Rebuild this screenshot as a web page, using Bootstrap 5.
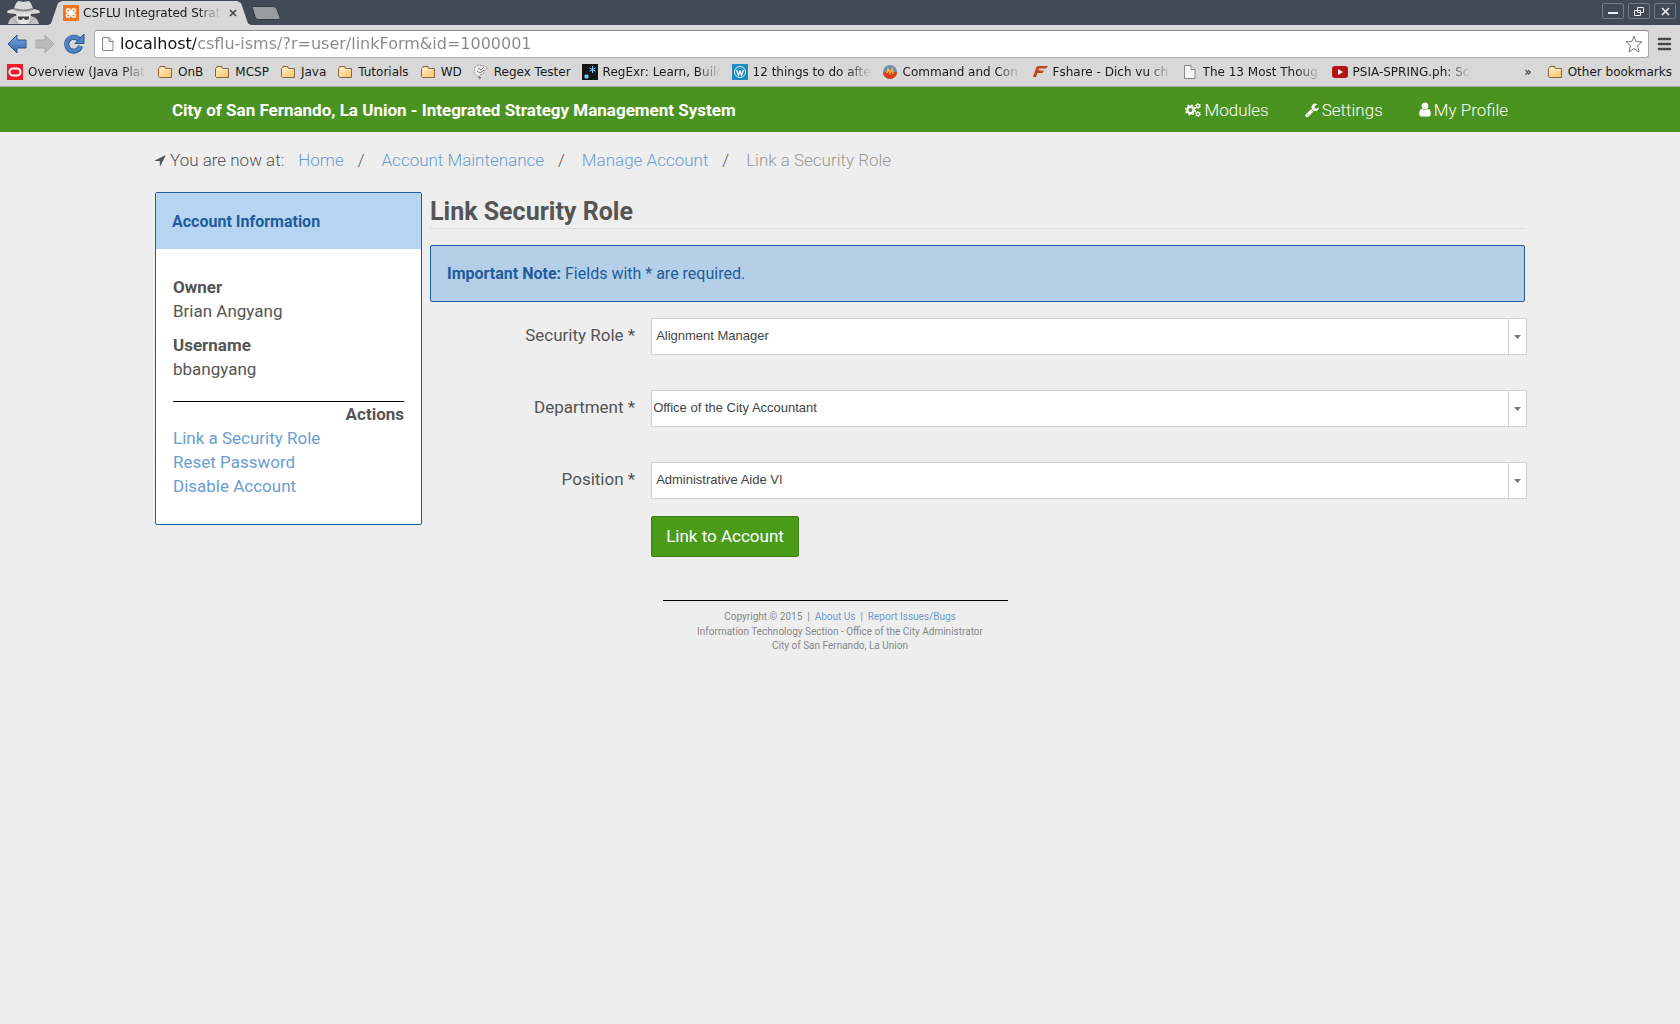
<!DOCTYPE html>
<html lang="en">
<head>
<meta charset="utf-8">
<meta name="viewport" content="width=device-width, initial-scale=1">
<title>CSFLU Integrated Strategy Management System</title>
<link href="https://cdn.jsdelivr.net/npm/bootstrap@5.3.0/dist/css/bootstrap.min.css" rel="stylesheet">
<style>
body { background: #eee; color: #555; font: 400 17px/24px Roboto, sans-serif; }
a { color: #6a9dd1; text-decoration: none; }
svg { display: block; flex: none; }

/* browser window */
.chrome-ui { font: 12px/16px "DejaVu Sans", sans-serif; color: #1a1a1a; background: #d8d8d8; border-bottom: 1px solid #aaa; }
.tab-strip { height: 25px; background: #424b55; }
.tab-shape { width: 203px; height: 25px; margin-left: 7px; background: #d8d8d8; clip-path: polygon(0 100%, 3px 94%, 10px 12%, 14px 4%, 189px 4%, 193px 12%, 200px 94%, 203px 100%); padding: 0 11px 0 15px; }
.tab-title { width: 138px; }
.new-tab { width: 30px; height: 14px; }
.plain-btn { border: 0; background: none; padding: 0; color: inherit; display: block; }
.win-btns { padding: 3px 4px 0 0; }
.win-btn { width: 22px; height: 16px; border: 1px solid #727a82; border-radius: 2px; background: none; padding: 0; display: flex; align-items: center; justify-content: center; }
.fade-text { white-space: nowrap; -webkit-mask-image: linear-gradient(to left, transparent, #000 24px); mask-image: linear-gradient(to left, transparent, #000 24px); }
.tool-bar { height: 34px; padding: 4px 8px 0 7px; }
.omnibox { height: 28px; background: #fff; border: 1px solid #a9a9a9; border-top-color: #8c8c8c; border-radius: 3px; padding: 0 5px 0 6px; margin-left: 9px; }
.omnibox input { border: 0; outline: 0; padding: 0; font: 16px/22px "DejaVu Sans", sans-serif; color: #888; background: linear-gradient(to right, #111 76px, #888 76px); -webkit-background-clip: text; background-clip: text; -webkit-text-fill-color: transparent; margin-left: 5px; }
.bookmarks { height: 27px; padding: 0 8px 2px 7px; gap: 11px; }
.bookmarks a { color: #1a1a1a; display: flex; align-items: center; gap: 5px; white-space: nowrap; }
.bookmarks .fade-text { width: 118px; }

/* page */
.page-width { max-width: 1370px; margin: 0 auto; }
.top-nav { background: #4b9321; height: 45px; }
.top-nav .page-width { padding: 0 17px; }
.brand-link { color: #fff; font-weight: 700; }
.top-links { gap: 36px; font-weight: 300; }
.top-links a { color: #fff; display: flex; align-items: center; gap: 3px; }
.crumbs { padding: 16px 0 20px; font-weight: 300; }
.crumbs ol { gap: 14px; margin: 0 0 0 14px; padding: 0; list-style: none; }
.crumbs li + li::before { content: "/"; margin-right: 17px; color: #555; }
.crumbs .here { color: #999; }
.side-col { flex: 0 0 20%; padding-right: 7px; }
.main-col { padding-left: 1px; }
.info-box { border: 1px solid #1f5c9c; border-radius: 2px; background: #fff; }
.info-head { background: #b6d5f3; color: #1f5c9c; font-size: 16px; font-weight: 700; padding: 17px 16px 15px; margin: 0; line-height: 24px; }
.info-body { padding: 26px 17px 26px; }
.info-body dl { margin: 0; }
.info-body dt { font-weight: 700; }
.info-body dd { margin: 0 0 10px; }
.info-actions { border-top: 1px solid #000; margin-top: 20px; }
.info-actions h3 { font-size: 17px; line-height: 24px; font-weight: 700; text-align: right; margin: 0; }
.page-title { font-size: 25px; line-height: 33px; padding-top: 3px; font-weight: 700; border-bottom: 1px solid #ddd; margin: 0 0 16px; }
.note-box { background: #b5cfe8; border: 1px solid #1f5c9c; border-radius: 2px; color: #1f5c9c; font-size: 16px; padding: 16px; margin-bottom: 16px; line-height: 23px; }
.form-line { gap: 16px; margin: 0 -2px 35px 0; }
.form-line label, .label-space { flex: 0 0 18.7%; text-align: right; padding-top: 5px; }
.combo { flex: 1; min-width: 0; height: 37px; appearance: none; border: 1px solid #d0d0d0; border-radius: 0; color: #444; font: 13px/15px "Liberation Sans", sans-serif; padding: 0 20px 2px 4px;
  background: url("data:image/svg+xml,%3Csvg xmlns='http://www.w3.org/2000/svg' width='7' height='4'%3E%3Cpath d='M0 0h7L3.500 4z' fill='%23777'/%3E%3C/svg%3E") no-repeat right 5px center, linear-gradient(#d0d0d0, #d0d0d0) no-repeat right 17px top / 1px 100%, #fff; }
.combo.flush { padding-left: 1px; }
.form-line.last-line { margin-bottom: 17px; }
.link-btn { background: #4a9b18; border: 1px solid #3b8010; border-radius: 2px; color: #fff; font-size: 17px; line-height: 23px; padding: 8px 14px; }
.foot { width: 354px; margin: 43px auto 0; font-size: 10px; line-height: 14px; color: #888; text-align: center; }
.foot hr { width: 345px; margin: 0 0 7px; border-top: 1px solid #000; opacity: 1; }
.foot p { margin: 0; }
.foot .links-line { line-height: 17px; }
</style>
<script src="https://cdn.jsdelivr.net/npm/bootstrap@5.3.0/dist/js/bootstrap.bundle.min.js"></script>
</head>
<body>
<svg width="0" height="0" class="position-absolute" aria-hidden="true">
  <defs>
    <linearGradient id="fold" x1="0" y1="0" x2="1" y2="1"><stop offset="0" stop-color="#ffedc4"/><stop offset="1" stop-color="#fbc56c"/></linearGradient>
    <linearGradient id="blue" x1="0" y1="0" x2="0" y2="1"><stop offset="0" stop-color="#7eaade"/><stop offset="1" stop-color="#3265a8"/></linearGradient>
    <symbol id="folder" viewBox="0 0 16 16"><path d="M1.500 12.500V4.500l1-1H3V2.500h5v1l.5 1h6v9h-12z" fill="url(#fold)" stroke="#8a6337"/><path d="M3 5.500h10.500" stroke="#fff3d6"/></symbol>
    <symbol id="sheet" viewBox="0 0 16 16"><path d="M2.500 1.500h6.500l4 4v9h-10.500z" fill="#f8f8f8" stroke="#888"/><path d="M9 1.500v4h4" fill="#ddd" stroke="#888"/></symbol>
  </defs>
</svg>

<header class="chrome-ui">
  <div class="tab-strip d-flex">
    <svg class="ms-1" width="37" height="25" viewBox="0 0 37 25"><path d="M4 24Q5 18 11 16H27Q34 18 35 24z" fill="#c4c4c4"/><path d="M12 14h15l-2 8-3 2h-5l-3-2z" fill="#e4e4e4"/><path d="M10 9Q12 1 15 1l4.500 1L24 1q3 0 5 8 7 1 7 3 0 2-16.500 2T3 12q0-2 7-3z" fill="#d9d9d9"/><path d="M10 9q9.500 3 19 0" fill="none" stroke="#8a8a8a" stroke-width="2"/><path d="M14 16.500h11v1q0 2.500-2.500 2.500-2.300 0-2.700-2h-.6q-.4 2-2.700 2-2.500 0-2.500-2.500z" fill="#444"/><path d="M8 17l5 6M31 17l-5 6" stroke="#909090"/></svg>
    <div class="tab-shape d-flex align-items-center">
      <svg width="16" height="16" viewBox="0 0 16 16"><rect width="16" height="16" rx="1" fill="#ee7623"/><path d="M5.500 5.500l5 5M10.500 5.500l-5 5" stroke="#fff" stroke-width="3"/><rect x="3.500" y="4" width="3.500" height="3" rx="1" fill="#ee7623" stroke="#fff" stroke-width="1.500"/><rect x="9" y="4" width="3.500" height="3" rx="1" fill="#ee7623" stroke="#fff" stroke-width="1.500"/><rect x="3.500" y="9" width="3.500" height="3" rx="1" fill="#ee7623" stroke="#fff" stroke-width="1.500"/><rect x="9" y="9" width="3.500" height="3" rx="1" fill="#ee7623" stroke="#fff" stroke-width="1.500"/><path d="M7 8h2" stroke="#fff" stroke-width="3"/></svg>
      <span class="tab-title fade-text ms-1">CSFLU Integrated Strat</span>
      <button class="plain-btn ms-2" aria-label="Close tab"><svg width="8" height="8" viewBox="0 0 8 8"><path d="M1 1l6 6M7 1L1 7" stroke="#444" stroke-width="1.600"/></svg></button>
    </div>
    <button class="plain-btn align-self-center" aria-label="New tab"><svg class="new-tab" viewBox="0 0 30 14"><path d="M1 0.500H22q3 0 4 3l3 8q1 2-2 2H8q-3 0-4-2.500z" fill="#989da2" stroke="#333a42"/></svg></button>
    <div class="win-btns ms-auto d-flex gap-1">
      <button class="win-btn" aria-label="Minimize"><svg width="10" height="8" viewBox="0 0 10 8"><path d="M0 6h10" stroke="#eee" stroke-width="2"/></svg></button>
      <button class="win-btn" aria-label="Restore"><svg width="10" height="9" viewBox="0 0 10 9"><path d="M3.500.5h6v5h-6zM.5 3.500h6v5h-6z" fill="none" stroke="#eee"/></svg></button>
      <button class="win-btn" aria-label="Close"><svg width="9" height="9" viewBox="0 0 9 9"><path d="M1 1l7 7M8 1L1 8" stroke="#eee" stroke-width="1.600"/></svg></button>
    </div>
  </div>
  <div class="tool-bar d-flex align-items-center">
    <button class="plain-btn" aria-label="Back"><svg width="20" height="20" viewBox="0 0 20 20"><path d="M1 10l9-9v5h9v8h-9v5z" fill="url(#blue)" stroke="#2c568f"/></svg></button>
    <button class="plain-btn ms-2" aria-label="Forward"><svg width="20" height="20" viewBox="0 0 20 20"><path d="M19 10l-9-9v5H1v8h9v5z" fill="#bbb" stroke="#aaa"/></svg></button>
    <button class="plain-btn ms-2" aria-label="Reload"><svg width="22" height="22" viewBox="0 0 22 22"><path d="M16 6.500A7 7 0 1017.500 13" fill="none" stroke="#2c568f" stroke-width="5"/><path d="M12 10.500h9V1z" fill="#5083c3" stroke="#2c568f"/><path d="M16 6.500A7 7 0 1017.300 13" fill="none" stroke="#5083c3" stroke-width="3.400"/></svg></button>
    <div class="omnibox d-flex align-items-center flex-grow-1">
      <svg width="14" height="16" viewBox="1 0 14 16"><use href="#sheet" width="16" height="16"/></svg>
      <input class="flex-grow-1" type="text" aria-label="Address" value="localhost/csflu-isms/?r=user/linkForm&amp;id=1000001">
      <button class="plain-btn" aria-label="Bookmark"><svg width="18" height="18" viewBox="0 0 18 18"><path d="M9 1l2 5.500 6 .3-4.500 3.900L14 17l-5-3.500L4 17l1.500-6.300L1 6.800l6-.3z" fill="#fff" stroke="#777"/></svg></button>
    </div>
    <button class="plain-btn ms-2" aria-label="Menu"><svg width="15" height="14" viewBox="0 0 15 14"><path d="M2 2h11M2 7h11M2 12h11" stroke="#4a4a4a" stroke-width="2.600" stroke-linecap="round"/></svg></button>
  </div>
  <nav class="bookmarks d-flex align-items-center" aria-label="Bookmarks">
    <a href="#"><svg width="16" height="16" viewBox="0 0 16 16"><rect width="16" height="16" fill="#ee1c24"/><rect x="2.500" y="4.500" width="11" height="7" rx="3.500" fill="none" stroke="#fff" stroke-width="2"/></svg><span class="fade-text">Overview (Java Platf</span></a>
    <a href="#"><svg width="16" height="16"><use href="#folder"/></svg>OnB</a>
    <a href="#"><svg width="16" height="16"><use href="#folder"/></svg>MCSP</a>
    <a href="#"><svg width="16" height="16"><use href="#folder"/></svg>Java</a>
    <a href="#"><svg width="16" height="16"><use href="#folder"/></svg>Tutorials</a>
    <a href="#"><svg width="16" height="16"><use href="#folder"/></svg>WD</a>
    <a href="#"><svg width="16" height="16" viewBox="0 0 16 16"><path d="M6 14L1 8l1-5 4-2 5 1 4 2-3 2-2 4-3 1z" fill="#eee" stroke="#999" stroke-dasharray="2 1"/><path d="M5 4l3 2 3-3M4 7l3 2 4-3" fill="none" stroke="#777"/><path d="M5 12l2 4 1-3z" fill="#777"/></svg>Regex Tester</a>
    <a href="#"><svg width="16" height="16" viewBox="0 0 16 16"><rect width="16" height="16" fill="#151515"/><path d="M3 11h3v3H3zM10.500 2v7M7.500 4l6 3.200M13.500 4l-6 3.200" fill="#6cf" stroke="#6cf"/></svg><span class="fade-text">RegExr: Learn, Build</span></a>
    <a href="#"><svg width="16" height="16" viewBox="0 0 16 16"><rect width="16" height="16" fill="#1e8cbe"/><circle cx="8" cy="8" r="5.500" fill="none" stroke="#e5f2f8"/><path d="M4.500 6l2 5L8 7l1.500 4L11.500 6" fill="none" stroke="#fff" stroke-width="1.300"/></svg><span class="fade-text">12 things to do afte</span></a>
    <a href="#"><svg width="16" height="16" viewBox="0 0 16 16"><circle cx="8" cy="8" r="7" fill="#6c8fb8"/><path d="M1 8q3 2 4-3l2 3 3-4 1 4 4 0a7 7 0 01-14 0z" fill="#d7401f"/><path d="M5 9l1-4 2 4 2-4 1 5" fill="none" stroke="#f5b63c" stroke-width="1.500"/></svg><span class="fade-text">Command and Con</span></a>
    <a href="#"><svg width="16" height="16" viewBox="0 0 16 16"><path d="M1 13L4 4q.5-2 3-2h9l-2 2.500H7L6.500 6.500H12L10.500 9H5.500L4 13z" fill="#c0441c"/></svg><span class="fade-text">Fshare - Dich vu ch</span></a>
    <a href="#"><svg width="16" height="16"><use href="#sheet"/></svg><span class="fade-text">The 13 Most Thoug</span></a>
    <a href="#"><svg width="16" height="16" viewBox="0 0 16 16"><rect y="2" width="16" height="12" rx="3" fill="#b31217"/><path d="M6 5l5 3-5 3z" fill="#fff"/></svg><span class="fade-text">PSIA-SPRING.ph: Sc</span></a>
    <button class="plain-btn ms-auto" aria-label="More bookmarks">»</button>
    <a href="#" class="ps-1"><svg width="16" height="16"><use href="#folder"/></svg>Other bookmarks</a>
  </nav>
</header>

<nav class="top-nav d-flex">
  <div class="page-width w-100 d-flex align-items-center justify-content-between">
    <a class="brand-link" href="#">City of San Fernando, La Union - Integrated Strategy Management System</a>
    <div class="top-links d-flex">
      <a href="#"><svg width="16" height="16" viewBox="0 0 16 16"><circle cx="5.500" cy="8" r="3.200" fill="none" stroke="#fff" stroke-width="2.400"/><circle cx="5.500" cy="8" r="4.900" fill="none" stroke="#fff" stroke-width="1.500" stroke-dasharray="1.950 1.900"/><g fill="none" stroke="#fff"><circle cx="13" cy="4" r="1.600" stroke-width="1.300"/><circle cx="13" cy="4" r="2.500" stroke-width="1" stroke-dasharray="1.300 1.310"/><circle cx="13" cy="12" r="1.600" stroke-width="1.300"/><circle cx="13" cy="12" r="2.500" stroke-width="1" stroke-dasharray="1.300 1.310"/></g></svg>Modules</a>
      <a href="#"><svg width="14" height="15" viewBox="0 0 1664 1664"><path fill="#fff" d="M384 1472q0-26-19-45t-45-19-45 19-19 45 19 45 45 19 45-19 19-45zm644-420l-682 682q-37 37-90 37-52 0-91-37l-106-108q-38-36-38-90 0-53 38-91l681-681q39 98 114.500 173.500t173.500 114.500zm634-435q0 39-23 106-47 134-164.500 217.500t-258.500 83.500q-185 0-316.500-131.500t-131.500-316.500 131.500-316.500 316.500-131.500q58 0 121.500 16.500t107.500 46.500q16 11 16 28t-16 28l-293 169v224l193 107q5-3 79-48.500t135.500-81 70.500-35.500q15 0 23.500 10t8.500 25z"/></svg>Settings</a>
      <a href="#"><svg width="12" height="15" viewBox="256 64 1280 1664"><path fill="#fff" d="M1536 1399q0 109-62.500 187t-150.500 78h-854q-88 0-150.500-78t-62.500-187q0-85 8.500-160.500t31.500-152 58.500-131 94-89 134.500-34.500q131 128 313 128t313-128q76 0 134.500 34.500t94 89 58.500 131 31.500 152 8.500 160.500zm-256-887q0 159-112.500 271.500t-271.500 112.500-271.500-112.500-112.500-271.500 112.500-271.500 271.500-112.500 271.500 112.500 112.500 271.500z"/></svg>My Profile</a>
    </div>
  </div>
</nav>

<div class="page-width">
  <nav class="crumbs d-flex align-items-center" aria-label="breadcrumb">
    <svg class="me-1" width="11" height="12" viewBox="192 128 1472 1504"><path fill="#555" d="M1593 349l-640 1280q-17 35-57 35-5 0-15-2-22-5-35.500-22.500t-13.500-39.500v-576h-576q-22 0-39.500-13.500t-22.500-35.500 4-42 29-30l1280-640q13-7 29-7 27 0 45 19 15 14 18.500 34.500t-6.500 39.500z"/></svg>
    <span>You are now at:</span>
    <ol class="d-flex">
      <li><a href="#">Home</a></li>
      <li><a href="#">Account Maintenance</a></li>
      <li><a href="#">Manage Account</a></li>
      <li class="here" aria-current="page">Link a Security Role</li>
    </ol>
  </nav>

  <div class="d-flex align-items-start">
    <aside class="side-col">
      <section class="info-box">
        <h2 class="info-head">Account Information</h2>
        <div class="info-body">
          <dl>
            <dt>Owner</dt>
            <dd>Brian Angyang</dd>
            <dt>Username</dt>
            <dd>bbangyang</dd>
          </dl>
          <div class="info-actions">
            <h3>Actions</h3>
            <a class="d-block" href="#">Link a Security Role</a>
            <a class="d-block" href="#">Reset Password</a>
            <a class="d-block" href="#">Disable Account</a>
          </div>
        </div>
      </section>
    </aside>
    <main class="main-col flex-grow-1">
      <h1 class="page-title">Link Security Role</h1>
      <div class="note-box" role="note"><strong>Important Note:</strong> Fields with * are required.</div>
      <form>
        <div class="form-line d-flex">
          <label for="role">Security Role *</label>
          <select id="role" class="combo"><option>Alignment Manager</option></select>
        </div>
        <div class="form-line d-flex">
          <label for="dept">Department *</label>
          <select id="dept" class="combo flush"><option>Office of the City Accountant</option></select>
        </div>
        <div class="form-line last-line d-flex">
          <label for="pos">Position *</label>
          <select id="pos" class="combo"><option>Administrative Aide VI</option></select>
        </div>
        <div class="form-line d-flex mb-0">
          <span class="label-space"></span>
          <button type="button" class="link-btn">Link to Account</button>
        </div>
      </form>
    </main>
  </div>
</div>

<footer class="foot">
  <hr>
  <p class="links-line">Copyright © 2015 &nbsp;|&nbsp; <a href="#">About Us</a> &nbsp;|&nbsp; <a href="#">Report Issues/Bugs</a></p>
  <p>Information Technology Section - Office of the City Administrator</p>
  <p>City of San Fernando, La Union</p>
</footer>
</body>
</html>
